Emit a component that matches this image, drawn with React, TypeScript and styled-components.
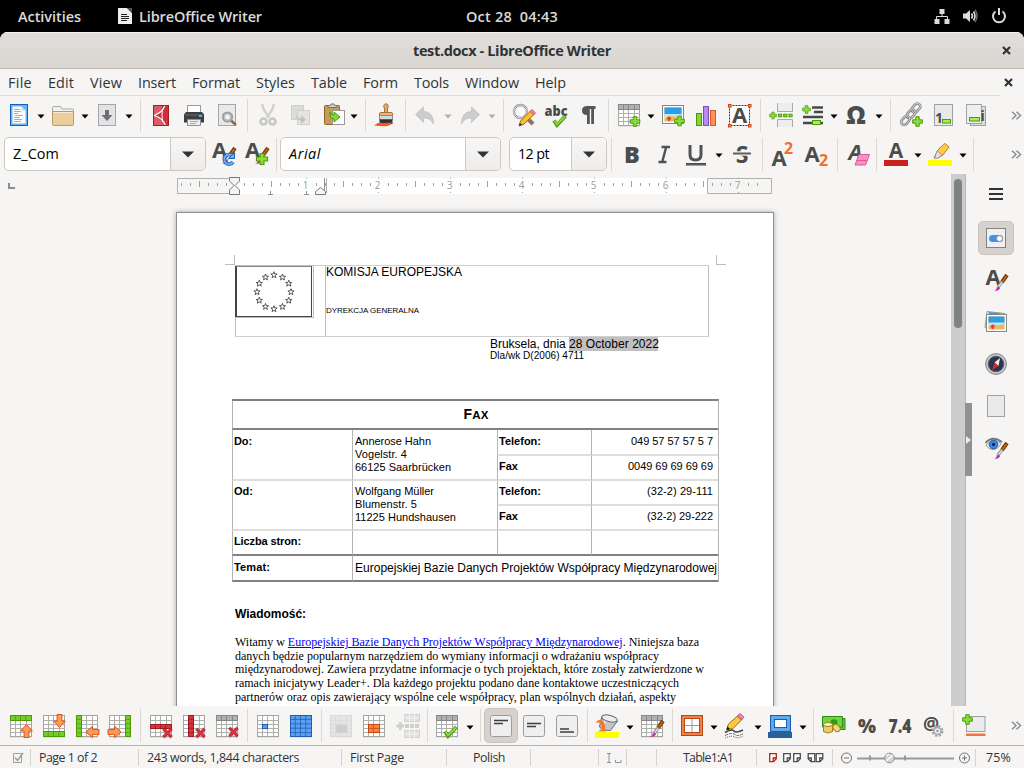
import React, { useLayoutEffect, useRef } from 'react';
import styled, { createGlobalStyle, css } from 'styled-components';

const ui = '"Open Sans", "Noto Sans", sans-serif';
const sans = '"Liberation Sans", Arial, sans-serif';
const serif = '"Liberation Serif", "Times New Roman", serif';

const Global = createGlobalStyle`
  * { box-sizing: border-box; }
  body { margin: 0; background: #000; overflow: hidden; }
  svg { display: block; flex: none; overflow: visible; }
`;

/* ---------- text that is tracked to a given measure ---------- */

const Run = styled.span<{ $size?: number; $bold?: boolean; $italic?: boolean }>`
  display: inline-block;
  white-space: pre;
  flex: none;
  ${p => p.$size && css`font-size: ${p.$size}px;`}
  ${p => p.$bold && css`font-weight: 700;`}
  ${p => p.$italic && css`font-style: italic;`}
`;

type FitProps = {
  w: number;
  size?: number;
  bold?: boolean;
  italic?: boolean;
  children: React.ReactNode;
};

function Fit({ w, size, bold, italic, children }: FitProps) {
  const ref = useRef<HTMLSpanElement>(null);
  useLayoutEffect(() => {
    const el = ref.current;
    if (!el) return;
    el.style.width = 'auto';
    el.style.letterSpacing = '0px';
    const natural = el.getBoundingClientRect().width;
    const count = (el.textContent || '').length;
    el.style.letterSpacing = `${(w - natural) / Math.max(count, 1)}px`;
    el.style.width = `${w}px`;
  }, [w]);
  return (
    <Run ref={ref} $size={size} $bold={bold} $italic={italic}>
      {children}
    </Run>
  );
}

/* ---------- shell ---------- */

const Screen = styled.div`
  width: 1024px;
  height: 768px;
  overflow: hidden;
  display: flex;
  flex-direction: column;
  background: #000;
  font-family: ${ui};
  color: #2e3436;
`;

const TopBar = styled.header`
  height: 32px;
  flex: none;
  display: grid;
  grid-template-columns: 466px 1fr auto;
  align-items: center;
  padding-right: 17px;
  color: #dadada;
  font-size: 14.5px;
  font-weight: 600;
`;
const TopLeft = styled.div`
  display: flex;
  align-items: center;
  padding-left: 18px;
`;
const AppBadge = styled.div`
  display: flex;
  align-items: center;
  gap: 7px;
  margin-left: 37px;
`;
const Tray = styled.div`
  display: flex;
  align-items: center;
  gap: 13px;
  & > svg:first-child { margin-right: -1px; }
`;

const Window = styled.div`
  flex: 1;
  min-height: 0;
  display: flex;
  flex-direction: column;
  background: #f6f5f4;
  border-radius: 8px 8px 0 0;
  overflow: hidden;
`;
const TitleBar = styled.div`
  height: 37px;
  flex: none;
  display: grid;
  grid-template-columns: 1fr auto 1fr;
  align-items: center;
  background: linear-gradient(#e1dedb, #dad6d2);
  border-bottom: 1px solid #bfb8b1;
  box-shadow: inset 0 1px #f5f4f2;
  padding: 0 13px;
  & > svg { justify-self: end; }
`;
const MenuBar = styled.nav`
  height: 27px;
  flex: none;
  display: flex;
  align-items: center;
  gap: 16px;
  padding: 0 11px 0 8px;
  font-size: 14.4px;
  background: linear-gradient(#dfdcd8, #dfdcd8) 0 100% / 1000px 1px no-repeat;
  & > svg { margin-left: auto; }
`;

/* ---------- toolbars ---------- */

const Bar = styled.div<{ $h: number; $pad?: number }>`
  height: ${p => p.$h}px;
  flex: none;
  display: flex;
  align-items: center;
  padding-left: ${p => p.$pad ?? 3}px;
  padding-right: 2px;
`;
const ToolButton = styled.span<{ $w?: number; $dim?: boolean; $inset?: number }>`
  width: ${p => p.$w ?? 32}px;
  padding-left: ${p => p.$inset ?? 4}px;
  flex: none;
  display: flex;
  opacity: ${p => (p.$dim ? 0.34 : 1)};
  filter: ${p => (p.$dim ? 'grayscale(1)' : 'none')};
`;
const ArrowSlot = styled.span<{ $w?: number; $dim?: boolean }>`
  width: ${p => p.$w ?? 12}px;
  flex: none;
  display: flex;
  justify-content: center;
  padding-top: 3px;
  opacity: ${p => (p.$dim ? 0.28 : 1)};
`;
const Divider = styled.span<{ $w?: number }>`
  width: ${p => p.$w ?? 9}px;
  height: 33px;
  flex: none;
  background: linear-gradient(#dbd8d5, #dbd8d5) center / 1px 100% no-repeat;
`;
const More = styled.span`
  margin-left: auto;
`;
const Combo = styled.div<{ $w: number; $ml?: number }>`
  width: ${p => p.$w}px;
  margin-left: ${p => p.$ml ?? 0}px;
  height: 34px;
  flex: none;
  display: flex;
  border: 1px solid #cdc7c2;
  border-radius: 5px;
  background: #fff;
  color: #000;
  font-size: 14.4px;
`;
const ComboValue = styled.div`
  flex: 1;
  display: flex;
  align-items: center;
  padding: 0 0 2px 8px;
`;
const ComboDrop = styled.div`
  width: 35px;
  display: flex;
  align-items: center;
  justify-content: center;
  border-left: 1px solid #cdc7c2;
  border-radius: 0 4px 4px 0;
  background: linear-gradient(#f8f7f6, #eeecea);
`;
const ActiveButton = styled.span`
  width: 34px;
  height: 35px;
  flex: none;
  margin-left: -1px;
  display: flex;
  align-items: center;
  padding-left: 4px;
  background: #d6d1cd;
  border: 1px solid #c9c3bd;
  border-radius: 5px;
`;

const Down = ({ w, dim }: { w?: number; dim?: boolean }) => (
  <ArrowSlot $w={w} $dim={dim}>
    <svg width="8" height="5" viewBox="0 0 8 5"><path d="M.5.5h7L4 4.5z" fill="#000" /></svg>
  </ArrowSlot>
);
const ComboArrow = () => (
  <svg width="12" height="7" viewBox="0 0 12 7"><path d="M0 .5h12L6 6.5z" fill="#2e3436" /></svg>
);
const Chevrons = () => (
  <More>
    <svg width="11" height="9" viewBox="0 0 11 9" fill="none" stroke="#8b8e8f" strokeWidth="1.5">
      <path d="M1 .7l4 3.800-4 3.800M5.500.7l4 3.800-4 3.800" />
    </svg>
  </More>
);
const CloseGlyph = () => (
  <svg width="9" height="9" viewBox="0 0 9 9"><path d="M1 1l7 7M8 1L1 8" stroke="#2e3436" strokeWidth="2.2" /></svg>
);

/* ---------- icon building blocks ---------- */

const Icon = ({ children }: { children: React.ReactNode }) => (
  <svg width="24" height="24" viewBox="0 0 24 24">{children}</svg>
);
const Plus = ({ x, y, s = 1 }: { x: number; y: number; s?: number }) => (
  <path transform={`translate(${x} ${y}) scale(${s})`} d="M-1.7-4.8h3.4v3.1h3.1v3.4H1.7v3.1h-3.4V1.7h-3.1v-3.4h3.1z" fill="#8ade3c" stroke="#4e9a06" />
);
const Cross = ({ x, y }: { x: number; y: number }) => (
  <path transform={`translate(${x} ${y})`} d="M-4.8-3.2l1.7-1.6L0-1.9l3.1-2.9 1.7 1.6L1.9 0l2.9 3.2-1.7 1.6L0 1.9l-3.1 2.9-1.7-1.6L-1.9 0z" fill="#dd3540" stroke="#a5141e" strokeWidth=".8" />
);
const BigArrow = ({ x, y, r }: { x: number; y: number; r: number }) => (
  <path transform={`translate(${x} ${y}) rotate(${r})`} d="M0-6.5L5.8 0H2.4v6.5h-4.8V0h-3.4z" fill="#ff9a55" stroke="#d9531e" />
);
const Brush = ({ y = 0 }: { y?: number }) => (
  <g transform={`translate(0 ${y})`}>
    <path d="M23 7l-5 7" stroke="#7a3c08" strokeWidth="4" />
    <path d="M22.5 8l-4 5.500" stroke="#c66a10" strokeWidth="1.5" />
    <path d="M18.500 13.500L14 19" stroke="#8d8d8d" strokeWidth="3.2" />
    <path d="M18 14.500l-3.400 4" stroke="#e8e8e8" strokeWidth="1.2" />
    <path d="M9 23q4-.3 3.500-3.500l2.800-.8.600 2Q14 23.500 9 23z" fill="#d01fb0" />
  </g>
);
type Mark = [number, number, number, number];
const Sheet = ({ head, green = [], red = [], blue = [], orange = [], gray = [], children }: {
  head?: boolean; green?: Mark[]; red?: Mark[]; blue?: Mark[]; orange?: Mark[]; gray?: Mark[]; children?: React.ReactNode;
}) => {
  const fill = (marks: Mark[], c: string, s: string) =>
    marks.map(([x, y, w, h], i) => (
      <g key={c + i}>
        <rect x={x + 0.5} y={y + 0.5} width={w - 1} height={h - 1} fill={c} stroke={s} />
        {Array.from({ length: Math.max(0, Math.round(w / 5) - 1) }, (_, k) => (
          <path key={'v' + k} d={`M${x + 5.25 * (k + 1)} ${y}v${h}`} stroke={s} strokeWidth=".8" />
        ))}
        {Array.from({ length: Math.max(0, Math.round(h / 4.4) - 1) }, (_, k) => (
          <path key={'h' + k} d={`M${x} ${y + 4.4 * (k + 1)}h${w}`} stroke={s} strokeWidth=".8" />
        ))}
      </g>
    ));
  return (
    <Icon>
      <rect x="1" y="22.5" width="22" height="1" fill="#000" opacity=".15" />
      <rect x="1.5" y="1.5" width="21" height="21" fill={gray.length ? '#c9c9c9' : '#fdfdfd'} stroke="#a3a5a1" />
      <path d="M6.5 1.5v21M11.5 1.5v21M17.5 1.5v21M1.5 6.5h21M1.5 10.5h21M1.5 14.5h21M1.5 18.5h21" stroke="#aeb0ac" />
      {head && <rect x="1.5" y="1.5" width="21" height="5" fill="#b0b1b3" stroke="#85878a" />}
      {head && <path d="M6.5 2v4M11.5 2v4M17.5 2v4" stroke="#85878a" />}
      {fill(green, '#76cc2c', '#4e9a06')}
      {fill(red, '#d8343c', '#9c1a20')}
      {fill(blue, '#5aa0f2', '#1f5fb0')}
      {fill(orange, '#ff8440', '#c54a12')}
      {gray.map(([x, y, w, h]) => <rect key={x} x={x} y={y} width={w} height={h} fill="#888" />)}
      {children}
    </Icon>
  );
};
const Check = () => (
  <g fill="none">
    <path d="M10 17.500l3 4.500L21.500 13" stroke="#4e9a06" strokeWidth="3.800" />
    <path d="M10.500 17.800l2.500 3.500L21 13.500" stroke="#8ade3c" strokeWidth="1.800" />
  </g>
);
const Letter = ({ x, y, s, c = '#4c4c4c', italic, w = 700, fit, children }: {
  x: number; y: number; s: number; c?: string; italic?: boolean; w?: number; fit?: number; children: string;
}) => (
  <text
    x={x} y={y} fontSize={s} fill={c} fontWeight={w} fontStyle={italic ? 'italic' : undefined}
    fontFamily={ui} textAnchor="middle" textLength={fit} lengthAdjust={fit ? 'spacingAndGlyphs' : undefined}
  >{children}</text>
);

/* ---------- standard toolbar icons ---------- */

const NewDoc = () => (
  <Icon>
    <rect x="3.500" y="1.500" width="17" height="21" fill="#68b5f6" stroke="#1260b8" />
    <path d="M5.500 3.500h9l4 4v13h-13z" fill="#fff" />
    <path d="M14.500 3.500v4h4z" fill="#b8dafa" />
    <path d="M7 6.500h6M7 8.500h7M7 10.500h4M8 12.500h8M7 14.500h6M7 16.500h8M7 18.500h7" stroke="#a9adb1" />
  </Icon>
);
const Folder = () => (
  <Icon>
    <path d="M1.500 21V4.500q0-1 1-1h7l1.500 2.500h10.500q1 0 1 1V21z" fill="#f2f2f0" stroke="#a9a9a5" />
    <path d="M1.500 8.500h21V21q0 1.500-1 1.500h-19q-1 0-1-1z" fill="#eacf9d" stroke="#bd9a62" />
    <path d="M2.500 9.500h19" stroke="#f8ebcf" />
  </Icon>
);
const Save = () => (
  <Icon>
    <rect x="3.500" y="1.500" width="17" height="21" fill="#e2e3e4" stroke="#a5a6a8" />
    <path d="M10 7h4v5h3.500L12 18l-5.500-6H10z" fill="#6c7076" />
  </Icon>
);
const Pdf = () => (
  <Icon>
    <rect x="4" y="2" width="16" height="21" fill="#cf2f3a" />
    <path d="M4.500 8v-6h9q-1 7-9 10.500Q13 15 15.500 22.500H4.500z" fill="#e88088" opacity=".55" />
    <path d="M16 2Q14 9 5 12.500 14 15 16.500 22.500" fill="none" stroke="#fff" strokeWidth="1.200" />
    <path d="M13.500 6q-1 6 0 13" fill="none" stroke="#fff" />
    <rect x="4.500" y="2.500" width="15" height="20" fill="none" stroke="#a51d26" />
  </Icon>
);
const Printer = () => (
  <Icon>
    <rect x="5.500" y="2.500" width="13" height="8" fill="#fff" stroke="#999" />
    <path d="M4 9h16l2 2.500v8H2v-8z" fill="#3c3e42" />
    <path d="M3 12h18" stroke="#6a6c70" />
    <rect x="17" y="12" width="3" height="2" fill="#2dc3ff" />
    <path d="M5.500 16.500h13v6h-13z" fill="#ededed" stroke="#8f8f8f" />
    <path d="M8 18.500h8M8 20.500h6" stroke="#aaa" />
  </Icon>
);
const Preview = () => (
  <Icon>
    <rect x="3.500" y="1.500" width="17" height="21" fill="#e9e9e9" stroke="#a5a6a8" />
    <path d="M16 17.500l5 4.500" stroke="#8a6a55" strokeWidth="2.500" />
    <circle cx="12.500" cy="14" r="4.700" fill="#d8dadc" stroke="#9a9c9e" strokeWidth="1.800" />
    <circle cx="12.500" cy="14" r="3" fill="#f3f3f3" stroke="#8d8f91" strokeWidth=".600" />
  </Icon>
);
const Cut = () => (
  <Icon>
    <path d="M6 1q1 6 7.500 13.500M18 1q-1 6-7.500 13.500" stroke="#8b8b8b" strokeWidth="2.400" fill="none" />
    <circle cx="7.500" cy="18.500" r="3" fill="none" stroke="#707070" strokeWidth="2.600" />
    <circle cx="16.500" cy="18.500" r="3" fill="none" stroke="#707070" strokeWidth="2.600" />
  </Icon>
);
const Copy = () => (
  <Icon>
    <rect x="3.500" y="2.500" width="12" height="14" fill="#aaa" stroke="#888" />
    <rect x="9.500" y="7.500" width="12" height="14" fill="#c5c5c5" stroke="#888" />
    <path d="M8 9q-.5 6 5 6v-3l5 4.500-5 4.500v-3Q7 17 8 9z" fill="#666" />
  </Icon>
);
const Paste = () => (
  <Icon>
    <rect x="3.500" y="2.500" width="15" height="19" rx="1" fill="#c89a55" stroke="#8f6526" />
    <path d="M7 4.500h9v-2h-2l-1-1.500h-3l-1 1.500H7z" fill="#ccc" stroke="#777" />
    <rect x="11.500" y="7.500" width="12" height="14" fill="#fff" stroke="#999" />
    <path d="M9 9q0 3 4 3v-3l6 5-6 5v-3Q8 16 9 9z" fill="#80d838" stroke="#4e9a06" />
  </Icon>
);
const PaintBrush = () => (
  <Icon>
    <path d="M10.500 10V6Q8.500 1 12 .800 15.500 1 13.500 6v4z" fill="#dfae6e" stroke="#a9743a" />
    <path d="M6.500 9.500h11q1 0 1 1.500v2.500h-13V11q0-1.500 1-1.500z" fill="#e3b87e" stroke="#a9743a" />
    <rect x="5.500" y="12.500" width="13" height="4" fill="#d7dadd" stroke="#8a8c90" />
    <path d="M5.500 16.500h13V21h-13z" fill="#2f3033" />
    <path d="M0 22.500q5-4 9-2.500l9-.5q-1 2.500-4.500 3.500-4 .8-13.500-.5z" fill="#f05a1e" />
  </Icon>
);
const Undo = () => (
  <Icon><path d="M10.500 4v4.500q10 0 10 12.500-3-6.500-10-6v4.500L2.500 11.500z" fill="#808080" stroke="#707070" /></Icon>
);
const Redo = () => (
  <Icon><path d="M13.500 4v4.500q-10 0-10 12.500 3-6.500 10-6v4.500l8-8z" fill="#808080" stroke="#707070" /></Icon>
);
const Find = () => (
  <Icon>
    <path d="M15 15l6 6" stroke="#8e7464" strokeWidth="4" />
    <circle cx="8.500" cy="8.500" r="6.500" fill="#fafafa" stroke="#8d8f91" strokeWidth="2.400" />
    <circle cx="8.500" cy="8.500" r="6.500" fill="none" stroke="#e6e6e6" strokeWidth=".900" />
    <path d="M7 23l1.500-5L19 7.500l3.500 3.500L12 21z" fill="#fbc02d" stroke="#a56a10" />
    <path d="M18 8.500L20 6.500l3.500 3.500-2 2z" fill="#ee8a9a" stroke="#b84a5a" strokeWidth=".800" />
    <path d="M7 23l1-3 2 2z" fill="#222" />
  </Icon>
);
const Spell = () => (
  <Icon>
    <Letter x={12} y={12.500} s={14} w={800} fit={23}>abc</Letter>
    <Check />
  </Icon>
);
const Pilcrow = () => (
  <Icon><path d="M19.500 3v3H18v15h-2.800V6h-1.400v15H11v-9Q6 12 6 7.500 6 3 11 3z" fill="#555759" /></Icon>
);
const Beach = ({ x, y, w, h }: { x: number; y: number; w: number; h: number }) => (
  <g transform={`translate(${x} ${y})`}>
    <rect x=".5" y=".5" width={w} height={h} fill="#fff" stroke="#858789" />
    <rect x="2.500" y="2.500" width={w - 4} height={h - 4} fill="#f2b65a" />
    <rect x="2.500" y="2.500" width={w - 4} height={h / 2 - 2} fill="#299fe6" />
    <path d={`M2.500 ${h / 2}h${w - 4}v1q-4 2.500-8 1.500t-${w - 12} 1.500z`} fill="#bfe6fa" />
    <path d={`M${w / 3} ${h - 6.500}v4.500M${w / 3 - 2} ${h - 4.500}h4`} stroke="#e2431e" strokeWidth="1.800" />
  </g>
);
const Image = () => <Icon><Beach x={1} y={2} w={21} h={18} /><Plus x={18.500} y={18} /></Icon>;
const Chart = () => (
  <Icon>
    <rect x="2.500" y="10.500" width="5" height="12" fill="#82d63c" stroke="#4e9a06" />
    <rect x="9.500" y="3.500" width="5" height="19" fill="#bb8af0" stroke="#7e4ac0" />
    <rect x="16.500" y="7.500" width="5" height="15" fill="#ff9450" stroke="#d45c1c" />
  </Icon>
);
const TextBox = () => (
  <Icon>
    <rect x="2.500" y="2.500" width="20" height="20" fill="#fff" stroke="#333" strokeDasharray="2 1" />
    <Letter x={12.500} y={20} s={22}>A</Letter>
    {[[1, 1], [21, 1], [1, 21], [21, 21]].map(([x, y]) => (
      <rect key={`${x}-${y}`} x={x + 0.500} y={y + 0.500} width="2.500" height="2.500" fill="#ff9a70" stroke="#c8451a" />
    ))}
  </Icon>
);
const PageBreak = () => (
  <Icon>
    <path d="M8.500 0v8.500h15V0M8.500 24v-7.500h15V24" fill="#eee" stroke="#a9aaab" />
    <path d="M9 12.500h15" stroke="#4e9a06" strokeWidth="3.600" strokeDasharray="4.200 1" />
    <path d="M10 12.500h13" stroke="#8ade3c" strokeWidth="1.600" strokeDasharray="2.400 2.800" />
    <Plus x={4} y={12.500} s={0.700} />
  </Icon>
);
const Field = () => (
  <Icon>
    <path d="M11 4.500h11M13 9h9M2 14h20M2 20h20" stroke="#46484a" strokeWidth="2.600" />
    <rect x="11.500" y="17.500" width="8" height="4" fill="#a4ee5c" stroke="#4e9a06" />
    <Plus x={5.500} y={6.500} s={0.800} />
  </Icon>
);
const Omega = () => <Icon><Letter x={12} y={21} s={24.500} w={800}>Ω</Letter></Icon>;
const Link = () => (
  <Icon>
    <g fill="none">
      {[[17, 5], [12, 11], [6.500, 17.500]].map(([x, y]) => (
        <g key={x} transform={`rotate(-50 ${x} ${y})`}>
          <rect x={x - 5} y={y - 3} width="10" height="6" rx="3" stroke="#7f8183" strokeWidth="2.600" />
          <rect x={x - 5} y={y - 3} width="10" height="6" rx="3" stroke="#cfd0d1" strokeWidth="1" />
        </g>
      ))}
    </g>
    <Plus x={18.500} y={18.500} />
  </Icon>
);
const Footnote = () => (
  <Icon>
    <rect x="3.500" y="1.500" width="18" height="21" fill="#e9e9e9" stroke="#a0a1a3" />
    <Letter x={8} y={20} s={14}>1</Letter>
    <rect x="11.500" y="16.500" width="8" height="3.500" fill="#a4ee5c" stroke="#4e9a06" />
  </Icon>
);
const Endnote = () => (
  <Icon>
    <rect x="6.500" y="3.500" width="15" height="19" fill="#ddd" stroke="#a0a1a3" />
    <rect x="2.500" y="1.500" width="15" height="19" fill="#efefef" stroke="#a0a1a3" />
    <rect x="5.500" y="14.500" width="10" height="3.500" fill="#a4ee5c" stroke="#4e9a06" />
    <Letter x={18.500} y={18} s={15}>i</Letter>
  </Icon>
);

/* ---------- formatting toolbar icons ---------- */

const StyleUpdate = () => (
  <Icon>
    <Letter x={7.500} y={16} s={22}>A</Letter>
    <Brush y={-1} />
    <path d="M20.500 14a4.800 4.800 0 1 0 .5 6" fill="none" stroke="#1f62b5" strokeWidth="3.600" />
    <path d="M20.500 14a4.800 4.800 0 1 0 .5 6" fill="none" stroke="#6fb2f7" strokeWidth="1.800" />
    <path d="M22.500 10.500v6h-6z" fill="#6fb2f7" stroke="#1f62b5" />
  </Icon>
);
const StyleNew = () => (
  <Icon><Letter x={7.500} y={16} s={22}>A</Letter><Brush y={-1} /><Plus x={17} y={17} s={1.150} /></Icon>
);
const Bold = () => <Icon><Letter x={12} y={21} s={23.500} w={800}>B</Letter></Icon>;
const Italic = () => (
  <Icon><path d="M9.500 5h8.500M6.500 20h8M14.200 5L10.200 20" stroke="#505254" strokeWidth="2.400" fill="none" /></Icon>
);
const Underline = () => (
  <Icon>
    <path d="M6 3v9.500q0 5.500 5.500 5.500t5.500-5.500V3" fill="none" stroke="#505254" strokeWidth="3" />
    <rect x="2.500" y="21.500" width="19" height="1.500" fill="#77797b" stroke="#46484a" />
  </Icon>
);
const Strike = () => (
  <Icon>
    <Letter x={12} y={20.500} s={23}>S</Letter>
    <path d="M3 11.500h18" stroke="#f6f5f4" strokeWidth="4.500" />
    <path d="M3 11.500h18" stroke="#5c5e60" strokeWidth="2" />
  </Icon>
);
const Super = () => <Icon><Letter x={9} y={23.500} s={22}>A</Letter><Letter x={18.700} y={12} s={16} c="#f0702c">2</Letter></Icon>;
const Sub = () => <Icon><Letter x={8} y={19.500} s={22}>A</Letter><Letter x={19.500} y={23.500} s={16} c="#f0702c">2</Letter></Icon>;
const ClearFormat = () => (
  <Icon>
    <Letter x={9.500} y={18} s={22} italic>A</Letter>
    <path d="M13 12.500h10.500L19.500 23H9z" fill="#ff8fc0" stroke="#d85a94" />
    <path d="M11 18.500h10" stroke="#d85a94" />
  </Icon>
);
const FontColor = () => <Icon><Letter x={12} y={16} s={21}>A</Letter><rect x="0" y="18" width="24" height="6" fill="#c9211e" /></Icon>;
const Highlight = () => (
  <Icon>
    <path d="M6 15.500l5-9L17 1.500l4 3.500-6 8-5 3z" fill="#ffc94d" stroke="#b5852a" />
    <path d="M9 9l5 4-4 3-3.500.500z" fill="#e3e3e3" stroke="#8a8a8a" strokeWidth=".800" />
    <rect x="0" y="18" width="24" height="6" fill="#ffff00" />
  </Icon>
);

/* ---------- table toolbar icons ---------- */

const AlignCell = ({ y, last }: { y: number; last?: boolean }) => (
  <Icon>
    <rect x="1.500" y="1.500" width="21" height="21" rx="2" fill="#efefef" stroke="#9b9d9f" />
    <path d={last ? `M5 ${y}h9M5 ${y + 3}h14` : `M5 ${y}h14M5 ${y + 3}h9`} stroke="#3c3e40" strokeWidth="1.500" />
  </Icon>
);
const Bucket = () => (
  <Icon>
    <path d="M6.500 3.500L4.500 13q3 3.500 11 3.500L22.500 7z" fill="#c4c6c9" stroke="#66686b" />
    <path d="M10 6L8.500 14" stroke="#f4f4f4" strokeWidth="1.600" />
    <ellipse cx="14.500" cy="4.500" rx="8" ry="3.200" transform="rotate(14 14.500 4.500)" fill="#eee" stroke="#66686b" />
    <path d="M.5 9Q4 3.500 8 7q3 4 2 8l1.500 2.500h-9q4-1.500 4-4.500Q6 7 .5 9z" fill="#f47a30" />
    <rect x="0" y="18" width="24" height="6" fill="#ffff00" />
  </Icon>
);
const BorderIcon = () => (
  <Icon>
    <rect x="3" y="3" width="18" height="17" fill="#fff" stroke="#bd4514" strokeWidth="4" />
    <rect x="3" y="3" width="18" height="17" fill="none" stroke="#f28a50" strokeWidth="1.800" />
    <path d="M12 5v13M5 11.500h14" stroke="#999" />
  </Icon>
);
const BorderStyle = () => (
  <Icon>
    <path d="M2.500 16l2-6L13.500 2l4 4L9 14.500z" fill="#fbc840" stroke="#9a6a12" />
    <path d="M13.500 2L16-.5l4 3.800L17.500 6z" fill="#ee8aa8" stroke="#a8506a" />
    <path d="M2.500 16l1-3.500 2.500 2.500z" fill="#111" />
    <path d="M1 18.500q7-4 9-1.500t9-1" fill="none" stroke="#444" strokeWidth="1.600" />
    <path d="M1 21.500q7-3.500 10-1t8-1" fill="none" stroke="#666" strokeDasharray="3 1" />
    <path d="M1 24q7-3 10-1t8-1" fill="none" stroke="#555" strokeDasharray="1 1" />
  </Icon>
);
const BorderColor = () => (
  <Icon>
    <rect x="4.500" y="3.500" width="16" height="12" fill="#fff" stroke="#1b5fae" strokeWidth="5" />
    <rect x="4.500" y="3.500" width="16" height="12" fill="none" stroke="#62adf5" strokeWidth="2.800" />
    <rect x="0" y="18" width="24" height="6" fill="#2a6099" />
  </Icon>
);
const Money = () => (
  <Icon>
    <path d="M2.500 4.500h20.500v11H5" fill="#5cc832" stroke="#2e8a14" />
    <path d="M.5 2.500h20v10.500H.5z" fill="#6ed63e" stroke="#2e8a14" />
    <ellipse cx="12" cy="8" rx="3.500" ry="2.800" fill="#2a9c18" />
    <path d="M1.500 10.500v7q4 3 9 0v-7z" fill="#eccd6c" stroke="#a37d1c" />
    <ellipse cx="6" cy="10.500" rx="4.500" ry="2" fill="#fff2b8" stroke="#a37d1c" />
    <ellipse cx="14.500" cy="14" rx="4" ry="3" transform="rotate(40 14.500 14)" fill="#f3d97e" stroke="#a37d1c" />
  </Icon>
);
const Percent = () => <Icon><Letter x={12} y={19} s={20} w={800} fit={18}>%</Letter></Icon>;
const Decimal = () => <Icon><Letter x={12} y={19} s={19.500} w={800} fit={23}>7.4</Letter></Icon>;
const NumberFormat = () => (
  <Icon>
    <Letter x={9} y={16} s={18}>@</Letter>
    <circle cx="15.500" cy="17" r="4.500" fill="none" stroke="#aaa" strokeWidth="3" strokeDasharray="2.200 1.330" />
    <circle cx="15.500" cy="17" r="3.500" fill="#eee" stroke="#aaa" strokeWidth="1.500" />
    <circle cx="15.500" cy="17" r="1.200" fill="#999" />
  </Icon>
);
const Caption = () => (
  <Icon>
    <rect x="4.500" y="2.500" width="18.500" height="15" fill="#ececec" stroke="#9b9d9f" />
    <rect x="4" y="19.500" width="19.500" height="2.500" fill="#f0763a" />
    <Plus x={5.500} y={5.500} />
  </Icon>
);
const SplitTable = () => (
  <Icon>
    <path d="M8.500.500h15v7h-15zM8.500 16.500h15v7h-15z" fill="#bbb" stroke="#888" />
    <path d="M8 4h15M13.500 0v8M18.500 0v8M8 20h15M13.500 16v8M18.500 16v8" stroke="#eee" />
    <path d="M9 12h14" stroke="#888" strokeWidth="4" strokeDasharray="4 1" />
    <path d="M3 8h2.500v2.500H8v3H5.500V16H3v-2.500H.5v-3H3z" fill="#888" />
  </Icon>
);

/* ---------- workspace ---------- */

const Workspace = styled.main`
  height: 532px;
  flex: none;
  display: flex;
`;
const Canvas = styled.div`
  width: 951px;
  flex: none;
  overflow: hidden;
  display: flex;
  flex-direction: column;
`;
const RulerRow = styled.div`
  height: 38px;
  flex: none;
  display: flex;
  padding-left: 8px;
  padding-top: 3px;
`;
const TabStop = styled.span`
  width: 7px;
  height: 6px;
  margin: 6px 162px 0 0;
  border-left: 2px solid #8b8e8f;
  border-bottom: 2px solid #8b8e8f;
`;
const Page = styled.article`
  position: relative;
  width: 598px;
  height: 600px;
  flex: none;
  margin-left: 176px;
  padding: 52px 0 0 58px;
  background: #fff;
  border: 1px solid #8f9191;
  box-shadow: 0 0 5px rgba(0, 0, 0, 0.32);
  color: #000;
`;
const CropMark = styled.span<{ $right?: boolean }>`
  position: absolute;
  top: 42px;
  left: ${p => (p.$right ? 539 : 48)}px;
  width: 10px;
  height: 10px;
  border-bottom: 1px solid #bdbdbd;
  ${p => (p.$right ? 'border-left: 1px solid #bdbdbd;' : 'border-right: 1px solid #bdbdbd;')}
`;
const Letterhead = styled.section`
  width: 474px;
  height: 72px;
  display: grid;
  grid-template-columns: 90px 1fr;
  border: 1px solid #bdbdbd;
  border-top-color: #cfcfcf;
  border-bottom-color: #cfcfcf;
`;
const FlagCell = styled.div`
  border-right: 1px solid #bdbdbd;
`;
const FlagFrame = styled.div`
  width: 79px;
  height: 53px;
  margin-top: -1px;
  margin-left: -1px;
  border: 1px solid #bdbdbd;
  border-left: 0;
`;
const Flag = styled.div`
  width: 77px;
  height: 51px;
  border: 1px solid #444;
  border-left-width: 2px;
  border-top-color: #888;
`;
const Org = styled.div`
  font-family: ${sans};
  display: flex;
  flex-direction: column;
  align-items: flex-start;
  line-height: 12px;
  gap: 27px;
`;
const DateBlock = styled.section`
  margin-left: 255px;
  font: 12px/14px ${sans};
  height: 25px;
`;
const DateLine = styled.div`
  display: flex;
`;
const FieldShade = styled.span`
  background: #c0c0c0;
  display: flex;
  width: 89px;
`;
const Reference = styled.div`
  font-size: 10px;
  line-height: 10px;
  display: flex;
`;
const FaxTable = styled.section`
  width: 487px;
  margin: 37px 0 0 -3px;
  display: grid;
  grid-template-columns: 120px 145px 94px 127px;
  grid-template-rows: 29px 26px 25px 25px 25px 25px 26px;
  border-top: 2px solid #808080;
  border-right: 1px solid #b4b4b4;
  font: 11px/13px ${sans};
`;
const Cell = styled.div<{ $span?: number; $rows?: number; $dark?: boolean; $pad?: number; $top?: number; $right?: boolean; $center?: boolean }>`
  grid-column: span ${p => p.$span ?? 1};
  grid-row: span ${p => p.$rows ?? 1};
  border-left: 1px solid #b4b4b4;
  border-bottom: 2px solid ${p => (p.$dark ? '#808080' : '#dedede')};
  padding: ${p => p.$top ?? 4}px 0 0 ${p => p.$pad ?? 1}px;
  display: flex;
  flex-direction: column;
  ${p => p.$right && css`padding-right: 5px;`}
  align-items: ${p => (p.$right ? 'flex-end' : p.$center ? 'center' : 'flex-start')};
`;
const SmallCaps = styled.span`
  font-weight: 700;
  font-size: 14px;
  line-height: 17px;
  letter-spacing: 0.1px;
  small { font-size: 11.500px; }
`;
const Heading = styled.h2`
  margin: 25px 0 0;
  font: 700 12px/14px ${sans};
`;
const Body = styled.p`
  margin: 15px 0 0;
  font: 12px/13.650px ${serif};
  display: flex;
  flex-direction: column;
  align-items: flex-start;
  a { color: #0000f4; text-decoration: underline; }
`;

const ScrollTrack = styled.div`
  width: 15px;
  flex: none;
  padding: 5px 0 0 3px;
  background: #cdcdcd;
  border-right: 1px solid #b6b6b6;
`;
const ScrollThumb = styled.div`
  width: 8px;
  height: 149px;
  border-radius: 4px;
  background: #7e8282;
`;
const DeckHandle = styled.div`
  width: 7px;
  height: 73px;
  flex: none;
  margin: 229px 0 0 -1px;
  background: #8e9292;
  display: flex;
  align-items: center;
  padding-left: 1px;
`;
const Sidebar = styled.aside`
  width: 48px;
  flex: none;
  display: flex;
  flex-direction: column;
  align-items: center;
  padding-top: 3px;
`;
const Tab = styled.span<{ $on?: boolean }>`
  width: 36px;
  height: 34px;
  margin-bottom: 8px;
  display: flex;
  align-items: center;
  justify-content: center;
  border-radius: 5px;
  border: 1px solid ${p => (p.$on ? '#c9c3bd' : 'transparent')};
  background: ${p => (p.$on ? '#d6d1cd' : 'none')};
  &:first-child { margin-bottom: 10px; }
`;

const Ruler = () => {
  const ticks: React.ReactNode[] = [];
  for (let i = -6; i <= 58; i++) {
    if (i === 0 || (i > 0 && i % 8 === 0)) continue;
    const x = Math.round(57.5 + i * 9) + 0.500;
    const half = Math.abs(i) % 4 === 0;
    ticks.push(<path key={i} d={half ? `M${x} 4v6` : `M${x} 6v3`} stroke="#9fa2a3" />);
  }
  return (
    <svg width="596" height="20" viewBox="0 0 596 20">
      <rect x="58" y="1" width="472" height="16" fill="#fff" />
      <path d="M58 1.500H.500v15H58M530.500 1.500h64v15h-64zM149.500 1v15" fill="none" stroke="#b0b1b1" />
      <path d="M147.500 1v15" stroke="#8f9293" />
      {ticks}
      {[1, 2, 3, 4, 5, 6, 7].map(n => (
        <g key={n}>
          <text x={56.500 + n * 72} y="11.500" fontFamily={ui} fontSize="10" fill="#9a9c9d" textAnchor="middle">{n}</text>
          <path d={`M${57.500 + n * 72} .5v1M${57.500 + n * 72} 15v1`} stroke="#9fa2a3" />
        </g>
      ))}
      <path d="M93.500 14v3M91 17.500h5M129.500 14v3M127 17.500h5" stroke="#8f9293" fill="none" />
      <path d="M52.500 .500h10V4L58 8.500 62.500 13v4.500h-10V13L57 8.500 52.500 4z" fill="#f6f5f4" stroke="#777a7b" />
      <path d="M143.500 10.500L148.500 14.500v3h-10v-3z" fill="#f6f5f4" stroke="#777a7b" />
    </svg>
  );
};

const starPath = (cx: number, cy: number, r: number) =>
  Array.from({ length: 10 }, (_, i) => {
    const a = (Math.PI / 5) * i - Math.PI / 2;
    const q = i % 2 ? r * 0.420 : r;
    return `${i ? 'L' : 'M'}${(cx + q * Math.cos(a)).toFixed(2)} ${(cy + q * Math.sin(a)).toFixed(2)}`;
  }).join('') + 'z';

const EuStars = () => (
  <svg width="74" height="49" viewBox="0 0 74 49">
    {Array.from({ length: 12 }, (_, i) => {
      const a = (Math.PI / 6) * i;
      return <path key={i} d={starPath(37 + 17 * Math.cos(a), 25 + 17 * Math.sin(a), 3.300)} fill="none" stroke="#333" strokeWidth=".800" />;
    })}
  </svg>
);

/* ---------- status bar ---------- */

const StatusBar = styled.footer`
  height: 23px;
  flex: none;
  display: flex;
  align-items: center;
  border-top: 1px solid #b6b3b0;
  font-size: 12.400px;
  padding-top: 1px;
`;
const StatusCell = styled.div<{ $w: number; $pad?: number; $last?: boolean }>`
  width: ${p => p.$w}px;
  height: 17px;
  flex: none;
  padding-left: ${p => p.$pad ?? 8}px;
  display: flex;
  align-items: center;
  border-right: ${p => (p.$last ? '0' : '1px solid #d6d3d0')};
`;

const PageGlyph = ({ x, c = '#4b4d4f', flip }: { x: number; c?: string; flip?: boolean }) => (
  <path
    transform={flip ? `translate(${x + 8} 0) scale(-1 1)` : `translate(${x} 0)`}
    d="M.7.7h6.600v5L4.500 8.700H.7zM7.300 5H4.200v3.500"
    fill="#fff" stroke={c} strokeWidth="1.300"
  />
);

const menus: [string, number][] = [
  ['File', 24], ['Edit', 26], ['View', 32], ['Insert', 38], ['Format', 48], ['Styles', 39],
  ['Table', 36], ['Form', 35], ['Tools', 35], ['Window', 54], ['Help', 31],
];

const B = ({ w, dim, inset, children }: { w?: number; dim?: boolean; inset?: number; children: React.ReactNode }) => (
  <ToolButton $w={w} $dim={dim} $inset={inset}>{children}</ToolButton>
);

export default function App() {
  return (
    <Screen>
      <Global />
      <TopBar>
        <TopLeft>
          <Fit w={63}>Activities</Fit>
          <AppBadge>
            <svg width="14" height="16" viewBox="0 0 14 16">
              <path d="M0 0h9l5 5v11H0z" fill="#eee" />
              <path d="M9 0h5v5z" fill="#555" />
              <path d="M3 6.500h6M3 8.500h8M3 10.500h8M3 12.500h6" stroke="#222" />
            </svg>
            <Fit w={123}>LibreOffice Writer</Fit>
          </AppBadge>
        </TopLeft>
        <div><Fit w={92}>{'Oct 28  04:43'}</Fit></div>
        <Tray>
          <svg width="16" height="16" viewBox="0 0 16 16" fill="#dcdcdc">
            <path d="M5.500 1h5v5h-5zM.500 11h5v5h-5zM10.500 11h5v5h-5z" />
            <path d="M8 6v3M2.500 11V8.500h11V11" fill="none" stroke="#dcdcdc" />
          </svg>
          <svg width="16" height="16" viewBox="0 0 16 16" fill="none" stroke="#dcdcdc" strokeWidth="1.600">
            <path d="M1 5.500h3L8 2v12l-4-3.500H1z" fill="#dcdcdc" stroke="none" />
            <path d="M9.500 5.500q2 2.500 0 5" /><path d="M11.500 3.500q3 4.500 0 9" />
            <path d="M13 1.800q4 6.200 0 12.400" stroke="#666" />
          </svg>
          <svg width="16" height="16" viewBox="0 0 16 16" fill="none" stroke="#dcdcdc" strokeWidth="2">
            <path d="M4.500 3.500a6 6 0 1 0 7 0M8 0v7" />
          </svg>
        </Tray>
      </TopBar>

      <Window>
        <TitleBar>
          <span />
          <Fit w={198} size={14.500} bold>test.docx - LibreOffice Writer</Fit>
          <CloseGlyph />
        </TitleBar>
        <MenuBar>
          {menus.map(([label, w]) => <Fit key={label} w={w}>{label}</Fit>)}
          <CloseGlyph />
        </MenuBar>

        <Bar $h={38}>
          <B><NewDoc /></B><Down /><B><Folder /></B><Down /><B><Save /></B><Down />
          <Divider $w={10} />
          <B w={33}><Pdf /></B><B w={33}><Printer /></B><B><Preview /></B>
          <Divider />
          <B dim><Cut /></B><B dim w={33}><Copy /></B><B w={31}><Paste /></B><Down />
          <Divider $w={10} />
          <B><PaintBrush /></B>
          <Divider $w={7} />
          <B dim><Undo /></B><Down w={13} dim /><B dim w={31}><Redo /></B><Down w={13} dim />
          <Divider $w={10} />
          <B><Find /></B><B><Spell /></B><B><Pilcrow /></B>
          <Divider />
          <B><Sheet head><Plus x={18} y={18.500} /></Sheet></B><Down />
          <B w={33}><Image /></B><B w={33}><Chart /></B><B w={33}><TextBox /></B>
          <Divider />
          <B><PageBreak /></B><B w={31}><Field /></B><Down />
          <B w={33}><Omega /></B><Down />
          <Divider $w={10} />
          <B><Link /></B><B w={33}><Footnote /></B><B><Endnote /></B>
          <Chevrons />
        </Bar>

        <Bar $h={40} $pad={4}>
          <Combo $w={202}>
            <ComboValue><Fit w={46}>Z_Com</Fit></ComboValue>
            <ComboDrop><ComboArrow /></ComboDrop>
          </Combo>
          <B w={35} inset={6}><StyleUpdate /></B>
          <B w={31}><StyleNew /></B>
          <Divider />
          <Combo $w={221} $ml={-1}>
            <ComboValue><Fit w={32} italic>Arial</Fit></ComboValue>
            <ComboDrop><ComboArrow /></ComboDrop>
          </Combo>
          <Combo $w={98} $ml={8}>
            <ComboValue><Fit w={31}>12 pt</Fit></ComboValue>
            <ComboDrop><ComboArrow /></ComboDrop>
          </Combo>
          <Divider />
          <B><Bold /></B><B><Italic /></B><B><Underline /></B><Down w={14} />
          <B><Strike /></B>
          <Divider $w={8} />
          <B w={34}><Super /></B><B><Sub /></B>
          <Divider $w={10} />
          <B w={31}><ClearFormat /></B>
          <Divider $w={7} />
          <B><FontColor /></B><Down />
          <B><Highlight /></B><Down w={13} />
          <Divider />
          <Chevrons />
        </Bar>

        <Workspace>
          <Canvas>
            <RulerRow><TabStop /><Ruler /></RulerRow>
            <Page>
              <CropMark /><CropMark $right />
              <Letterhead>
                <FlagCell><FlagFrame><Flag><EuStars /></Flag></FlagFrame></FlagCell>
                <Org>
                  <Fit w={136} size={12}>KOMISJA EUROPEJSKA</Fit>
                  <Fit w={93} size={8}>DYREKCJA GENERALNA</Fit>
                </Org>
              </Letterhead>
              <DateBlock>
                <DateLine>
                  <Fit w={79}>{'Bruksela, dnia '}</Fit>
                  <FieldShade><Fit w={90}>28 October 2022</Fit></FieldShade>
                </DateLine>
                <Reference><Fit w={94}>Dla/wk D(2006) 4711</Fit></Reference>
              </DateBlock>
              <FaxTable>
                <Cell $span={4} $dark $center $top={5}><SmallCaps>F<small>AX</small></SmallCaps></Cell>
                <Cell $rows={2} $top={5}><Fit w={18} bold>Do:</Fit></Cell>
                <Cell $rows={2} $pad={2} $top={5}>
                  <Fit w={76}>Annerose Hahn</Fit><Fit w={52}>Vogelstr. 4</Fit><Fit w={96}>66125 Saarbrücken</Fit>
                </Cell>
                <Cell $top={5}><Fit w={42} bold>Telefon:</Fit></Cell>
                <Cell $right $top={5}><Fit w={82}>049 57 57 57 5 7</Fit></Cell>
                <Cell><Fit w={19} bold>Fax</Fit></Cell>
                <Cell $right><Fit w={85}>0049 69 69 69 69</Fit></Cell>
                <Cell $rows={2}><Fit w={19} bold>Od:</Fit></Cell>
                <Cell $rows={2} $pad={2}>
                  <Fit w={79}>Wolfgang Müller</Fit><Fit w={62}>Blumenstr. 5</Fit><Fit w={101}>11225 Hundshausen</Fit>
                </Cell>
                <Cell><Fit w={42} bold>Telefon:</Fit></Cell>
                <Cell $right><Fit w={66}>(32-2) 29-111</Fit></Cell>
                <Cell><Fit w={19} bold>Fax</Fit></Cell>
                <Cell $right><Fit w={66}>(32-2) 29-222</Fit></Cell>
                <Cell $dark><Fit w={67} bold>Liczba stron:</Fit></Cell>
                <Cell $dark /><Cell $dark /><Cell $dark />
                <Cell $dark $top={5}><Fit w={36} bold>Temat:</Fit></Cell>
                <Cell $dark $span={3} $pad={2} $top={6}>
                  <Fit w={362} size={12}>Europejskiej Bazie Danych Projektów Współpracy Międzynarodowej</Fit>
                </Cell>
              </FaxTable>
              <Heading><Fit w={71}>Wiadomość:</Fit></Heading>
              <Body>
                <Fit w={464}>Witamy w <a>Europejskiej Bazie Danych Projektów Współpracy Międzynarodowej</a>. Niniejsza baza</Fit>
                <Fit w={424}>danych będzie popularnym narzędziem do wymiany informacji o wdrażaniu współpracy</Fit>
                <Fit w={469}>międzynarodowej. Zawiera przydatne informacje o tych projektach, które zostały zatwierdzone w</Fit>
                <Fit w={444}>ramach inicjatywy Leader+. Dla każdego projektu podano dane kontaktowe uczestniczących</Fit>
                <Fit w={441}>partnerów oraz opis zawierający wspólne cele współpracy, plan wspólnych działań, aspekty</Fit>
              </Body>
            </Page>
          </Canvas>
          <ScrollTrack><ScrollThumb /></ScrollTrack>
          <DeckHandle>
            <svg width="5" height="8" viewBox="0 0 5 8"><path d="M0 0v8l5-4z" fill="#eee" /></svg>
          </DeckHandle>
          <Sidebar>
            <Tab>
              <svg width="14" height="12" viewBox="0 0 14 12"><path d="M0 1h14M0 6h14M0 11h14" stroke="#2e3436" strokeWidth="2" /></svg>
            </Tab>
            <Tab $on>
              <Icon>
                <rect x="2.500" y="2.500" width="19" height="19" fill="#f0f0f1" stroke="#808284" />
                <rect x="5" y="9" width="14" height="7" rx="3.500" fill="#3d94ea" />
                <circle cx="15.500" cy="12.500" r="3" fill="#fff" stroke="#8a8c8e" />
              </Icon>
            </Tab>
            <Tab><Icon><Letter x={9} y={17} s={22}>A</Letter><Brush /></Icon></Tab>
            <Tab>
              <Icon>
                <path d="M3 1.500l18 2-2 16-18-2z" fill="#fff" stroke="#999" /><path d="M4.500 3l14 1.500" stroke="#299fe6" strokeWidth="2" />
                <Beach x={2} y={4} w={20} h={17} />
              </Icon>
            </Tab>
            <Tab>
              <Icon>
                <circle cx="12" cy="12" r="10.400" fill="#c9cacb" stroke="#7d7f81" />
                <circle cx="12" cy="12" r="7.800" fill="#2c3550" stroke="#5d6065" />
                <path d="M16 6l-1.500 8-4-3.500z" fill="#f0f0f0" /><path d="M8 18l2.500-7.500 4 3.500z" fill="#d52a2a" />
              </Icon>
            </Tab>
            <Tab><Icon><rect x="3.500" y="1.500" width="17" height="21" fill="#eaeaea" stroke="#a0a2a4" /></Icon></Tab>
            <Tab>
              <Icon>
                <path d="M2 9Q9 1 17 7.500 14 14 8 13.500 4 13 2 9z" fill="#f4f4f4" stroke="#999" />
                <circle cx="9.500" cy="8.500" r="4.300" fill="#3b8ae6" stroke="#1b5aa8" /><circle cx="9.500" cy="8.500" r="1.700" fill="#0c2a55" />
                <path d="M1.500 7Q8-1 18 6" fill="none" stroke="#777" strokeWidth="1.800" />
                <Brush />
              </Icon>
            </Tab>
          </Sidebar>
        </Workspace>

        <Bar $h={39} $pad={5}>
          <B w={33}><Sheet green={[[1, 1, 22, 6]]}><BigArrow x={17.500} y={17} r={0} /></Sheet></B>
          <B w={33}><Sheet green={[[1, 17, 22, 6]]}><BigArrow x={17.500} y={7} r={180} /></Sheet></B>
          <B w={33}><Sheet green={[[1, 1, 6, 22]]}><BigArrow x={17.500} y={18} r={-90} /></Sheet></B>
          <B><Sheet green={[[17, 1, 6, 22]]}><BigArrow x={6.500} y={18} r={90} /></Sheet></B>
          <Divider />
          <B w={33}><Sheet red={[[1, 10, 22, 5]]}><Cross x={18.500} y={19} /></Sheet></B>
          <B w={33}><Sheet red={[[6, 1, 6, 22]]}><Cross x={18.500} y={19} /></Sheet></B>
          <B><Sheet head><Cross x={18.500} y={18} /></Sheet></B>
          <Divider />
          <B w={33}><Sheet blue={[[6, 10, 6, 5]]} /></B>
          <B><Sheet blue={[[1, 1, 22, 22]]} /></B>
          <Divider $w={8} />
          <B dim w={33}><Sheet gray={[[7, 11, 11, 8]]} /></B>
          <B w={34}><Sheet orange={[[6, 10, 12, 9]]} /></B>
          <B dim w={31}><SplitTable /></B>
          <Divider $w={8} />
          <B><Sheet head><Check /></Sheet></B><Down w={13} />
          <Divider $w={9} />
          <ActiveButton><AlignCell y={6.500} /></ActiveButton>
          <B w={33}><AlignCell y={9.500} /></B>
          <B w={33}><AlignCell y={15} last /></B>
          <Divider $w={7} />
          <B><Bucket /></B><Down w={13} />
          <B w={33}><Sheet head><Brush /></Sheet></B>
          <Divider $w={7} />
          <B><BorderIcon /></B><Down />
          <B><BorderStyle /></B><Down />
          <B><BorderColor /></B><Down w={13} />
          <Divider />
          <B w={33}><Money /></B><B w={33}><Percent /></B><B w={34}><Decimal /></B><B w={31}><NumberFormat /></B>
          <Divider />
          <B><Caption /></B>
          <Chevrons />
        </Bar>

        <StatusBar>
          <StatusCell $w={31} $pad={12}>
            <svg width="12" height="12" viewBox="0 0 12 12" fill="none" stroke="#9d9fa0">
              <path d="M1.500 1.500h8v9h-8z" /><path d="M3 5.500l2.500 3L11 1" strokeWidth="1.500" />
            </svg>
          </StatusCell>
          <StatusCell $w={108}><Fit w={58}>Page 1 of 2</Fit></StatusCell>
          <StatusCell $w={203}><Fit w={152}>243 words, 1,844 characters</Fit></StatusCell>
          <StatusCell $w={105}><Fit w={54}>First Page</Fit></StatusCell>
          <StatusCell $w={84} $pad={26}><Fit w={32}>Polish</Fit></StatusCell>
          <StatusCell $w={68} />
          <StatusCell $w={28} $pad={7}>
            <svg width="16" height="10" viewBox="0 0 16 10" fill="none" stroke="#8f9192"><path d="M1 .5h4M1 9.500h4M3 .5v9M9.500 7v2.500h5.500V7" /></svg>
          </StatusCell>
          <StatusCell $w={30} />
          <StatusCell $w={100} $pad={26}><Fit w={50}>Table1:A1</Fit></StatusCell>
          <StatusCell $w={76} $pad={12}>
            <svg width="56" height="10" viewBox="0 0 56 10">
              <PageGlyph x={0} c="#b5280c" /><PageGlyph x={14} /><PageGlyph x={24} />
              <PageGlyph x={38.500} flip /><PageGlyph x={46.500} />
            </svg>
          </StatusCell>
          <StatusCell $w={143} $pad={7}>
            <svg width="132" height="12" viewBox="0 0 132 12" fill="none" stroke="#6d7071">
              <path d="M17 6.500h97" stroke="#969a9a" strokeWidth="2" />
              <path d="M30 3.500v5M65 3.500v5" stroke="#969a9a" strokeWidth="2" />
              <circle cx="6.500" cy="6" r="5" /><path d="M4 6h5" />
              <circle cx="124.500" cy="6" r="5" /><path d="M122 6h5M124.500 3.500v5" />
              <circle cx="49.500" cy="6" r="4.800" fill="#d5d6d6" stroke="#8a8d8e" />
              <path d="M46 9l7-6M46 4l3-2" stroke="#fff" strokeWidth="1.200" />
            </svg>
          </StatusCell>
          <StatusCell $w={48} $pad={10} $last><Fit w={25}>75%</Fit></StatusCell>
        </StatusBar>
      </Window>
    </Screen>
  );
}
